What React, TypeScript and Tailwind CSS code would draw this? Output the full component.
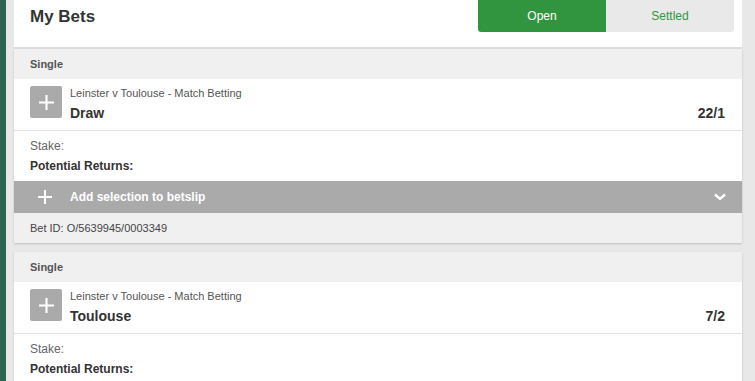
import React from 'react';

const BETS = [
  { id: 'O/5639945/0003349', market: 'Leinster v Toulouse - Match Betting', selection: 'Draw', odds: '22/1' },
  { id: 'O/5639945/0003350', market: 'Leinster v Toulouse - Match Betting', selection: 'Toulouse', odds: '7/2' },
];

const Plus = ({ size = 14 }: { size?: number }) => (
  <svg width={size} height={size} viewBox="0 0 14 14" fill="none">
    <path d="M7 0v14M0 7h14" stroke="white" strokeWidth="2" />
  </svg>
);

const BetCard = ({ bet }: { bet: (typeof BETS)[number] }) => (
  <div className="bg-white shadow-[0_1px_2px_rgba(0,0,0,0.18)] mb-[9px]">
    {/* Bet type */}
    <div className="h-[30px] bg-[#f0f0f0] flex items-center px-4 text-[11px] font-bold text-[#555]">Single</div>

    {/* Selection */}
    <div className="h-[52px] flex items-start pt-[7px] px-4 border-b border-[#e1e4e8]">
      <div className="w-8 h-8 rounded-[2px] bg-[#aaaaaa] flex items-center justify-center shrink-0">
        <Plus size={15} />
      </div>
      <div className="flex-1 ml-2">
        <div className="text-[11px] text-[#555] leading-[14px]">{bet.market}</div>
        <div className="flex justify-between items-center mt-[5px]">
          <span className="text-[14px] font-bold text-[#333] leading-[16px]">{bet.selection}</span>
          <span className="text-[14px] font-bold text-[#333] leading-[16px] pr-[1px]">{bet.odds}</span>
        </div>
      </div>
    </div>

    {/* Stake */}
    <div className="h-[50px] px-4 pt-[8px] text-[12px]">
      <div className="text-[#666] leading-[14px]">Stake:</div>
      <div className="text-[#333] font-bold leading-[14px] mt-[6px]">Potential Returns:</div>
    </div>

    {/* Add selection */}
    <div className="h-8 bg-[#aaaaaa] flex items-center pl-[24px] pr-[16px] text-white">
      <Plus size={14} />
      <span className="ml-[18px] text-[12px] font-bold flex-1">Add selection to betslip</span>
      <svg width="12" height="8" viewBox="0 0 12 8" fill="none">
        <path d="M1 1.5l5 4.5 5-4.5" stroke="white" strokeWidth="2.4" />
      </svg>
    </div>

    {/* Bet ID */}
    <div className="h-[30px] bg-[#f0f0f0] flex items-center px-4 text-[11px] text-[#444]">Bet ID: {bet.id}</div>
  </div>
);

export default function App() {
  return (
    <div
      className="flex h-[381px] w-[755px] overflow-hidden bg-[#e8e8e8]"
      style={{ fontFamily: '"Liberation Sans", Arial, sans-serif' }}
    >
      <div className="w-[6px] bg-[#2b6552] shrink-0" />
      <div className="ml-[8px] w-[728px] shrink-0">
        {/* Header */}
        <div className="h-[49px] bg-white flex justify-between items-start pl-4 pr-2 border-b-2 border-[#dedede]">
          <h1 className="text-[17px] font-bold text-[#333] mt-[4px]">My Bets</h1>
          <div className="flex">
            <button className="w-[128px] h-8 bg-[#31953f] text-white text-[12px] rounded-bl-[3px]">Open</button>
            <button className="w-[128px] h-8 bg-[#e9e9e9] text-[#31953f] text-[12px] rounded-br-[3px]">Settled</button>
          </div>
        </div>
        {BETS.map((bet) => (
          <BetCard key={bet.id} bet={bet} />
        ))}
      </div>
    </div>
  );
}
